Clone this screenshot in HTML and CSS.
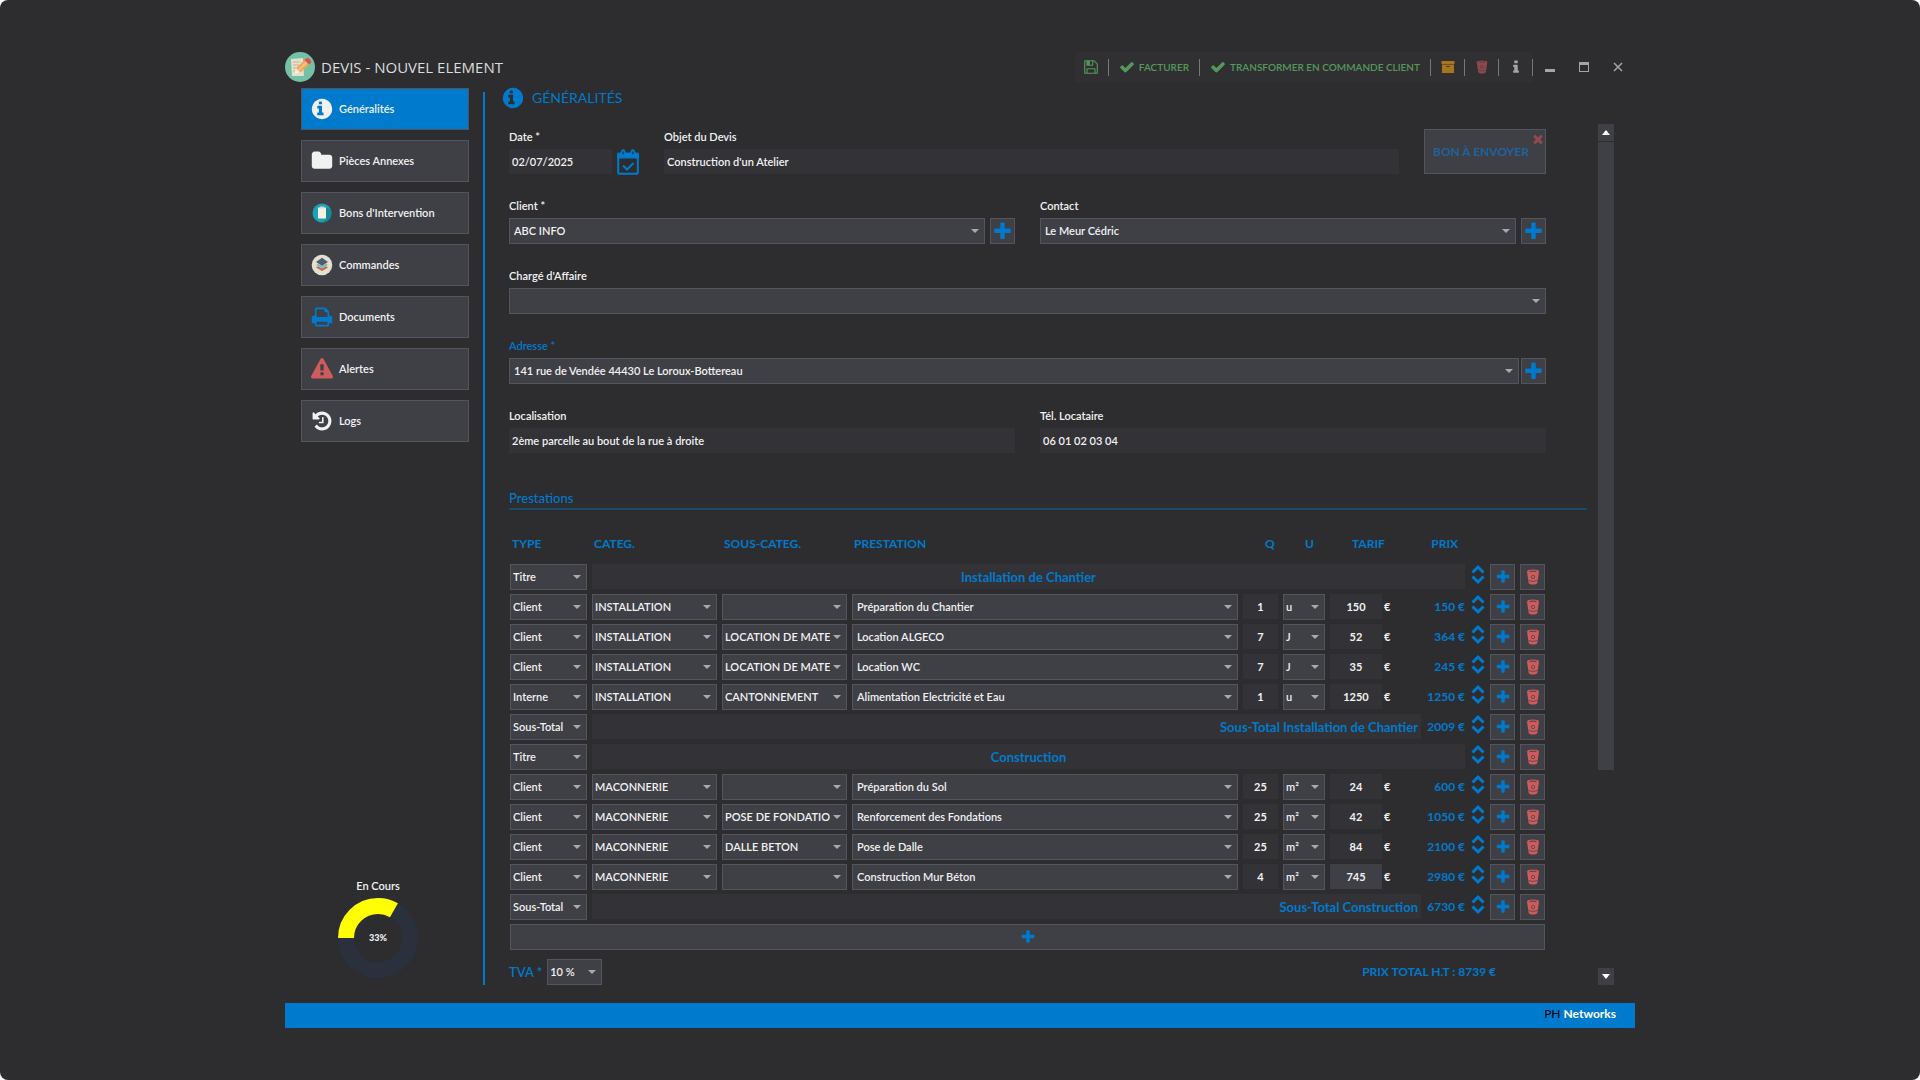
FILE: index.html
```html
<!DOCTYPE html>
<html lang="fr">
<head>
<meta charset="utf-8">
<title>Devis - Nouvel element</title>
<link rel="stylesheet" href="styles.css">
</head>
<body>
<svg class="sprite" aria-hidden="true">
  <symbol id="i-info-circle" viewBox="0 0 1792 1792"><path d="M1024 1376v-160q0-14-9-23t-23-9h-96v-512q0-14-9-23t-23-9h-320q-14 0-23 9t-9 23v160q0 14 9 23t23 9h96v320h-96q-14 0-23 9t-9 23v160q0 14 9 23t23 9h448q14 0 23-9t9-23zM896 480v-160q0-14-9-23t-23-9h-192q-14 0-23 9t-9 23v160q0 14 9 23t23 9h192q14 0 23-9t9-23zM1728 896q0 226-111 416t-303 303-418 113-416-113-304-303-112-416 112-416 304-303 416-113 418 113 303 303 111 416z"/></symbol>
  <symbol id="i-folder" viewBox="0 0 1792 1792"><path d="M1728 608v704q0 92-66 158t-158 66h-1216q-92 0-158-66t-66-158v-960q0-92 66-158t158-66h320q92 0 158 66t66 158v32h672q92 0 158 66t66 158z"/></symbol>
  <symbol id="i-plus" viewBox="0 0 1792 1792"><path d="M1600 736v192q0 40-28 68t-68 28h-416v416q0 40-28 68t-68 28h-192q-40 0-68-28t-28-68v-416h-416q-40 0-68-28t-28-68v-192q0-40 28-68t68-28h416v-416q0-40 28-68t68-28h192q40 0 68 28t28 68v416h416q40 0 68 28t28 68z"/></symbol>
  <symbol id="i-check" viewBox="0 0 1792 1792"><path d="M1671 566q0 40-28 68l-724 724-136 136q-28 28-68 28t-68-28l-136-136-362-362q-28-28-28-68t28-68l136-136q28-28 68-28t68 28l294 295 656-657q28-28 68-28t68 28l136 136q28 28 28 68z"/></symbol>
  <symbol id="i-times" viewBox="0 0 1792 1792"><path d="M1490 1322q0 40-28 68l-136 136q-28 28-68 28t-68-28l-294-294-294 294q-28 28-68 28t-68-28l-136-136q-28-28-28-68t28-68l294-294-294-294q-28-28-28-68t28-68l136-136q28-28 68-28t68 28l294 294 294-294q28-28 68-28t68 28l136 136q28 28 28 68t-28 68l-294 294 294 294q28 28 28 68z"/></symbol>
  <symbol id="i-info" viewBox="0 0 1792 1792"><path d="M1216 1344v128q0 26-19 45t-45 19h-512q-26 0-45-19t-19-45v-128q0-26 19-45t45-19h64v-384h-64q-26 0-45-19t-19-45v-128q0-26 19-45t45-19h384q26 0 45 19t19 45v576h64q26 0 45 19t19 45zM1088 224v192q0 26-19 45t-45 19h-256q-26 0-45-19t-19-45v-192q0-26 19-45t45-19h256q26 0 45 19t19 45z"/></symbol>
  <symbol id="i-warning" viewBox="0 0 1792 1792"><path d="M1024 1375v-190q0-14-9.5-23.5t-22.5-9.5h-192q-13 0-22.5 9.5t-9.5 23.5v190q0 14 9.5 23.5t22.5 9.5h192q13 0 22.5-9.5t9.5-23.5zm-2-374l18-459q0-12-10-19-13-11-24-11h-220q-11 0-24 11-10 7-10 21l17 457q0 10 10 16.5t24 6.5h185q14 0 23.5-6.5t10.5-16.5zm-14-934l768 1408q35 63-2 126-17 29-46.5 46t-63.5 17h-1536q-34 0-63.5-17t-46.5-46q-37-63-2-126l768-1408q17-31 47-49t65-18 65 18 47 49z"/></symbol>
  <symbol id="i-history" viewBox="0 0 1792 1792"><path d="M1664 896q0 156-61 298t-164 245-245 164-298 61q-172 0-327-72.5t-264-204.5q-7-10-6.5-22.5t8.5-20.5l137-138q10-9 25-9 16 2 23 12 73 95 179 147t225 52q104 0 198.5-40.5t163.5-109.5 109.5-163.5 40.5-198.5-40.5-198.5-109.5-163.5-163.5-109.5-198.5-40.5q-98 0-188 35.5t-160 101.5l137 138q31 30 14 69-17 40-59 40h-448q-26 0-45-19t-19-45v-448q0-42 40-59 39-17 69 14l130 129q107-101 244.5-156.5t284.5-55.5q156 0 298 61t245 164 164 245 61 298zm-640-288v448q0 14-9 23t-23 9h-320q-14 0-23-9t-9-23v-64q0-14 9-23t23-9h224v-352q0-14 9-23t23-9h64q14 0 23 9t9 23z"/></symbol>
  <symbol id="i-print" viewBox="0 0 1792 1792"><path d="M448 1536h896v-256h-896v256zm0-640h896v-384h-160q-40 0-68-28t-28-68v-160h-640v640zm1280 64v416q0 13-9.5 22.5t-22.5 9.5h-224v160q0 40-28 68t-68 28h-960q-40 0-68-28t-28-68v-160h-224q-13 0-22.5-9.5t-9.5-22.5v-416q0-79 56.5-135.5t135.5-56.5h64v-544q0-40 28-68t68-28h672q40 0 88 20t76 48l152 152q28 28 48 76t20 88v256h64q79 0 135.5 56.5t56.5 135.5z"/></symbol>
  <symbol id="i-save" viewBox="0 0 1792 1792"><path d="M512 1536h768v-384h-768v384zm896 0h128v-896q0-14-10-38.5t-20-34.5l-281-281q-10-10-34-20t-39-10v416q0 40-28 68t-68 28h-576q-40 0-68-28t-28-68v-416h-128v1280h128v-416q0-40 28-68t68-28h832q40 0 68 28t28 68v416zm-384-928v-320q0-13-9.5-22.5t-22.5-9.5h-192q-13 0-22.5 9.5t-9.5 22.5v320q0 13 9.5 22.5t22.5 9.5h192q13 0 22.5-9.5t9.5-22.5zm640 32v928q0 40-28 68t-68 28h-1344q-40 0-68-28t-28-68v-1344q0-40 28-68t68-28h928q40 0 88 20t76 48l280 280q28 28 48 76t20 88z"/></symbol>
  <symbol id="i-archive" viewBox="0 0 14 14"><path fill-rule="evenodd" d="M.5 1h13v3h-13zM1 4.500h12V13H1zM5.500 6v1h3V6z"/></symbol>
  <symbol id="i-trash" viewBox="0 0 14 16"><path d="M1 2.500Q1 .5 7 .5t6 2l-1.600 11q-.4 2-4.400 2t-4.400-2z"/><g fill="none" stroke="#3f3f46" stroke-opacity=".75"><path d="M3.500 2.700q3.500-1 7 0" stroke-width="1.200"/><circle cx="7" cy="8" r="1.700" stroke-width=".9"/><path d="M2.700 11.500q4.300 2 8.600 0" stroke-width=".9"/></g></symbol>
  <symbol id="i-calendar" viewBox="0 0 22 26"><rect x="1.200" y="6" width="19.600" height="18.800" rx="1" fill="none" stroke="currentColor" stroke-width="2"/><path d="M0 5q0-1.500 1.500-1.500h19Q22 3.500 22 5v4.500H0z"/><path d="M4 2.500a2.200 2.200 0 0 1 4.400 0v3a2.200 2.200 0 0 1-4.400 0zM13.600 2.500a2.200 2.200 0 0 1 4.400 0v3a2.200 2.200 0 0 1-4.400 0z"/><path d="M6.200 2.500v3M15.800 2.500v3" stroke="#2d2d30" stroke-width="1.200"/><path d="M6 16.500l4 4 6.500-6.500" fill="none" stroke="currentColor" stroke-width="2"/></symbol>
  <symbol id="i-updown" viewBox="0 0 14 22"><path d="M1.500 8.500l5.500-5.500 5.500 5.500M1.500 12.500l5.500 5.500 5.500-5.500" fill="none" stroke="currentColor" stroke-width="3"/></symbol>
</svg>

<div class="screen">
  <header class="titlebar">
    <svg class="app-logo" viewBox="0 0 30 30" aria-hidden="true"><circle cx="15" cy="15" r="15" fill="#74c1a5"/><path d="M6 7l12-1 1 18H7z" fill="#e6e0cd"/><path d="M8 10h7M8 13h6M8 16h3M8 19h2" stroke="#bdb7a6"/><path d="M10 22l1-6 4 4z" fill="#f7f3e6"/><path d="M11 16l8.500-8 4.500 4.500-8.500 8z" fill="#f2a65a"/><path d="M12.500 17.500l8.500-8 1.500 1.500-8.500 8z" fill="#f7c27c"/><path d="M19.500 8l2-1.700q1.500-.8 3.500 1.200t1 3.500L24 12.500z" fill="#d9534f"/></svg>
    <h1>DEVIS - NOUVEL ELEMENT</h1>
    <div class="toolbar">
      <button class="icon" aria-label="Enregistrer"><svg class="s16"><use href="#i-save"/></svg></button>
      <button><svg class="s16"><use href="#i-check"/></svg>FACTURER</button>
      <button><svg class="s16"><use href="#i-check"/></svg>TRANSFORMER EN COMMANDE CLIENT</button>
      <button class="icon amber" aria-label="Archiver"><svg class="s14"><use href="#i-archive"/></svg></button>
      <button class="icon red" aria-label="Supprimer"><svg class="s14"><use href="#i-trash"/></svg></button>
      <button class="icon grey" aria-label="Informations"><svg class="s16"><use href="#i-info"/></svg></button>
    </div>
    <div class="window-buttons">
      <button aria-label="Réduire"><svg viewBox="0 0 10 12"><path d="M0 8h10v3H0z"/></svg></button>
      <button aria-label="Agrandir"><svg viewBox="0 0 10 12"><path fill-rule="evenodd" d="M0 1h10v10H0zM1 4v6h8V4z"/></svg></button>
      <button aria-label="Fermer"><svg viewBox="0 0 10 12"><path d="M1 2l8 8M9 2l-8 8" fill="none" stroke="currentColor" stroke-width="1.500"/></svg></button>
    </div>
  </header>

  <main class="body">
    <aside class="sidebar">
      <nav>
        <button class="active"><svg class="s22"><use href="#i-info-circle"/></svg>Généralités</button>
        <button><svg class="s22"><use href="#i-folder"/></svg>Pièces Annexes</button>
        <button><svg class="s22" viewBox="0 0 22 22"><circle cx="11" cy="11" r="9.500" fill="#1aa3b5"/><path d="M11 20.500A9.500 9.500 0 0 0 20 8l-5-3v12z" fill="#16889a"/><rect x="7" y="5.500" width="8" height="11" fill="#f4f1e4"/><rect x="9" y="4.500" width="4" height="2" fill="#d9d5c5"/></svg>Bons d'Intervention</button>
        <button><svg class="s22" viewBox="0 0 22 22"><circle cx="11" cy="11" r="10.300" fill="#e3e0cf"/><path d="M5 13.500l6 3.500 6-3.500-2-1.200-4 2.200-4-2.200z" fill="#cf5f5b"/><path d="M5 11l6 3.500 6-3.500-2-1.300-4 2-4-2z" fill="#76c2af"/><path d="M11 3.800l6 4.200-6 3.700L5 8z" fill="#4f5d73"/></svg>Commandes</button>
        <button><svg class="s22 blue"><use href="#i-print"/></svg>Documents</button>
        <button><svg class="s22 danger"><use href="#i-warning"/></svg>Alertes</button>
        <button><svg class="s22"><use href="#i-history"/></svg>Logs</button>
      </nav>
      <div class="status">
        <span>En Cours</span>
        <div class="gauge">
          <svg viewBox="0 0 80 80" aria-hidden="true"><circle class="gauge-track" cx="40" cy="40" r="32"/><circle class="gauge-value" cx="40" cy="40" r="32" pathLength="100" transform="rotate(180 40 40)"/></svg>
          <strong>33%</strong>
        </div>
      </div>
    </aside>

    <section class="content">
      <h2><svg class="s22"><use href="#i-info-circle"/></svg>GÉNÉRALITÉS</h2>
      <div class="scroll-area">
        <form class="form">
          <div class="fields">
            <div class="row row-top">
              <div class="field date"><label for="date">Date *</label><div class="control"><input id="date" value="02/07/2025"><button type="button" class="calendar" aria-label="Choisir une date"><svg><use href="#i-calendar"/></svg></button></div></div>
              <div class="field grow"><label for="objet">Objet du Devis</label><input id="objet" value="Construction d'un Atelier"></div>
              <button type="button" class="send"><span>BON À ENVOYER</span><svg><use href="#i-times"/></svg></button>
            </div>
            <div class="row">
              <div class="field grow"><label for="client">Client *</label><div class="control"><select id="client"><option>ABC INFO</option></select><button type="button" class="add" aria-label="Ajouter un client"><svg><use href="#i-plus"/></svg></button></div></div>
              <div class="field grow"><label for="contact">Contact</label><div class="control"><select id="contact"><option>Le Meur Cédric</option></select><button type="button" class="add" aria-label="Ajouter un contact"><svg><use href="#i-plus"/></svg></button></div></div>
            </div>
            <div class="field"><label for="charge">Chargé d'Affaire</label><select id="charge"><option></option></select></div>
            <div class="field"><label class="blue" for="adresse">Adresse *</label><div class="control tight"><select id="adresse"><option>141 rue de Vendée 44430 Le Loroux-Bottereau</option></select><button type="button" class="add" aria-label="Ajouter une adresse"><svg><use href="#i-plus"/></svg></button></div></div>
            <div class="row">
              <div class="field grow"><label for="loc">Localisation</label><input id="loc" value="2ème parcelle au bout de la rue à droite"></div>
              <div class="field grow"><label for="tel">Tél. Locataire</label><input id="tel" value="06 01 02 03 04"></div>
            </div>
          </div>

          <h3>Prestations</h3>
          <div class="lines">
            <table>
              <colgroup><col class="c-type"><col class="c-cat"><col class="c-cat"><col><col class="c-q"><col class="c-u"><col class="c-tarif"><col class="c-prix"><col class="c-move"><col class="c-btn"><col class="c-btn"></colgroup>
              <thead><tr><th>TYPE</th><th>CATEG.</th><th>SOUS-CATEG.</th><th>PRESTATION</th><th class="num">Q</th><th class="num">U</th><th class="num">TARIF</th><th class="end">PRIX</th><td></td><td></td><td></td></tr></thead>
              <tbody>
                <tr><td><select aria-label="Type"><option>Titre</option></select></td><td colspan="7"><input class="title" aria-label="Titre" value="Installation de Chantier"></td><td><button type="button" class="move" aria-label="Déplacer"><svg><use href="#i-updown"/></svg></button></td><td><button type="button" class="add" aria-label="Ajouter"><svg><use href="#i-plus"/></svg></button></td><td><button type="button" class="del" aria-label="Supprimer"><svg><use href="#i-trash"/></svg></button></td></tr>
                <tr><td><select aria-label="Type"><option>Client</option></select></td><td><select aria-label="Catégorie"><option>INSTALLATION</option></select></td><td><select aria-label="Sous-catégorie"><option></option></select></td><td><select class="wide" aria-label="Prestation"><option>Préparation du Chantier</option></select></td><td><input class="qty" aria-label="Quantité" value="1"></td><td><select aria-label="Unité"><option>u</option></select></td><td><div class="tarif"><input class="qty" aria-label="Tarif" value="150">€</div></td><td class="prix">150 €</td><td><button type="button" class="move" aria-label="Déplacer"><svg><use href="#i-updown"/></svg></button></td><td><button type="button" class="add" aria-label="Ajouter"><svg><use href="#i-plus"/></svg></button></td><td><button type="button" class="del" aria-label="Supprimer"><svg><use href="#i-trash"/></svg></button></td></tr>
                <tr><td><select aria-label="Type"><option>Client</option></select></td><td><select aria-label="Catégorie"><option>INSTALLATION</option></select></td><td><select aria-label="Sous-catégorie"><option>LOCATION DE MATERIEL</option></select></td><td><select class="wide" aria-label="Prestation"><option>Location ALGECO</option></select></td><td><input class="qty" aria-label="Quantité" value="7"></td><td><select aria-label="Unité"><option>J</option></select></td><td><div class="tarif"><input class="qty" aria-label="Tarif" value="52">€</div></td><td class="prix">364 €</td><td><button type="button" class="move" aria-label="Déplacer"><svg><use href="#i-updown"/></svg></button></td><td><button type="button" class="add" aria-label="Ajouter"><svg><use href="#i-plus"/></svg></button></td><td><button type="button" class="del" aria-label="Supprimer"><svg><use href="#i-trash"/></svg></button></td></tr>
                <tr><td><select aria-label="Type"><option>Client</option></select></td><td><select aria-label="Catégorie"><option>INSTALLATION</option></select></td><td><select aria-label="Sous-catégorie"><option>LOCATION DE MATERIEL</option></select></td><td><select class="wide" aria-label="Prestation"><option>Location WC</option></select></td><td><input class="qty" aria-label="Quantité" value="7"></td><td><select aria-label="Unité"><option>J</option></select></td><td><div class="tarif"><input class="qty" aria-label="Tarif" value="35">€</div></td><td class="prix">245 €</td><td><button type="button" class="move" aria-label="Déplacer"><svg><use href="#i-updown"/></svg></button></td><td><button type="button" class="add" aria-label="Ajouter"><svg><use href="#i-plus"/></svg></button></td><td><button type="button" class="del" aria-label="Supprimer"><svg><use href="#i-trash"/></svg></button></td></tr>
                <tr><td><select aria-label="Type"><option>Interne</option></select></td><td><select aria-label="Catégorie"><option>INSTALLATION</option></select></td><td><select aria-label="Sous-catégorie"><option>CANTONNEMENT</option></select></td><td><select class="wide" aria-label="Prestation"><option>Alimentation Electricité et Eau</option></select></td><td><input class="qty" aria-label="Quantité" value="1"></td><td><select aria-label="Unité"><option>u</option></select></td><td><div class="tarif"><input class="qty" aria-label="Tarif" value="1250">€</div></td><td class="prix">1250 €</td><td><button type="button" class="move" aria-label="Déplacer"><svg><use href="#i-updown"/></svg></button></td><td><button type="button" class="add" aria-label="Ajouter"><svg><use href="#i-plus"/></svg></button></td><td><button type="button" class="del" aria-label="Supprimer"><svg><use href="#i-trash"/></svg></button></td></tr>
                <tr><td><select aria-label="Type"><option>Sous-Total</option></select></td><td colspan="7"><div class="subtotal"><input class="title" aria-label="Sous-total" value="Sous-Total Installation de Chantier"><span class="prix">2009 €</span></div></td><td><button type="button" class="move" aria-label="Déplacer"><svg><use href="#i-updown"/></svg></button></td><td><button type="button" class="add" aria-label="Ajouter"><svg><use href="#i-plus"/></svg></button></td><td><button type="button" class="del" aria-label="Supprimer"><svg><use href="#i-trash"/></svg></button></td></tr>
                <tr><td><select aria-label="Type"><option>Titre</option></select></td><td colspan="7"><input class="title" aria-label="Titre" value="Construction"></td><td><button type="button" class="move" aria-label="Déplacer"><svg><use href="#i-updown"/></svg></button></td><td><button type="button" class="add" aria-label="Ajouter"><svg><use href="#i-plus"/></svg></button></td><td><button type="button" class="del" aria-label="Supprimer"><svg><use href="#i-trash"/></svg></button></td></tr>
                <tr><td><select aria-label="Type"><option>Client</option></select></td><td><select aria-label="Catégorie"><option>MACONNERIE</option></select></td><td><select aria-label="Sous-catégorie"><option></option></select></td><td><select class="wide" aria-label="Prestation"><option>Préparation du Sol</option></select></td><td><input class="qty" aria-label="Quantité" value="25"></td><td><select aria-label="Unité"><option>m²</option></select></td><td><div class="tarif"><input class="qty" aria-label="Tarif" value="24">€</div></td><td class="prix">600 €</td><td><button type="button" class="move" aria-label="Déplacer"><svg><use href="#i-updown"/></svg></button></td><td><button type="button" class="add" aria-label="Ajouter"><svg><use href="#i-plus"/></svg></button></td><td><button type="button" class="del" aria-label="Supprimer"><svg><use href="#i-trash"/></svg></button></td></tr>
                <tr><td><select aria-label="Type"><option>Client</option></select></td><td><select aria-label="Catégorie"><option>MACONNERIE</option></select></td><td><select aria-label="Sous-catégorie"><option>POSE DE FONDATIONS</option></select></td><td><select class="wide" aria-label="Prestation"><option>Renforcement des Fondations</option></select></td><td><input class="qty" aria-label="Quantité" value="25"></td><td><select aria-label="Unité"><option>m²</option></select></td><td><div class="tarif"><input class="qty" aria-label="Tarif" value="42">€</div></td><td class="prix">1050 €</td><td><button type="button" class="move" aria-label="Déplacer"><svg><use href="#i-updown"/></svg></button></td><td><button type="button" class="add" aria-label="Ajouter"><svg><use href="#i-plus"/></svg></button></td><td><button type="button" class="del" aria-label="Supprimer"><svg><use href="#i-trash"/></svg></button></td></tr>
                <tr><td><select aria-label="Type"><option>Client</option></select></td><td><select aria-label="Catégorie"><option>MACONNERIE</option></select></td><td><select aria-label="Sous-catégorie"><option>DALLE BETON</option></select></td><td><select class="wide" aria-label="Prestation"><option>Pose de Dalle</option></select></td><td><input class="qty" aria-label="Quantité" value="25"></td><td><select aria-label="Unité"><option>m²</option></select></td><td><div class="tarif"><input class="qty" aria-label="Tarif" value="84">€</div></td><td class="prix">2100 €</td><td><button type="button" class="move" aria-label="Déplacer"><svg><use href="#i-updown"/></svg></button></td><td><button type="button" class="add" aria-label="Ajouter"><svg><use href="#i-plus"/></svg></button></td><td><button type="button" class="del" aria-label="Supprimer"><svg><use href="#i-trash"/></svg></button></td></tr>
                <tr><td><select aria-label="Type"><option>Client</option></select></td><td><select aria-label="Catégorie"><option>MACONNERIE</option></select></td><td><select aria-label="Sous-catégorie"><option></option></select></td><td><select class="wide" aria-label="Prestation"><option>Construction Mur Béton</option></select></td><td><input class="qty" aria-label="Quantité" value="4"></td><td><select aria-label="Unité"><option>m²</option></select></td><td><div class="tarif"><input class="qty current" aria-label="Tarif" value="745">€</div></td><td class="prix">2980 €</td><td><button type="button" class="move" aria-label="Déplacer"><svg><use href="#i-updown"/></svg></button></td><td><button type="button" class="add" aria-label="Ajouter"><svg><use href="#i-plus"/></svg></button></td><td><button type="button" class="del" aria-label="Supprimer"><svg><use href="#i-trash"/></svg></button></td></tr>
                <tr><td><select aria-label="Type"><option>Sous-Total</option></select></td><td colspan="7"><div class="subtotal"><input class="title" aria-label="Sous-total" value="Sous-Total Construction"><span class="prix">6730 €</span></div></td><td><button type="button" class="move" aria-label="Déplacer"><svg><use href="#i-updown"/></svg></button></td><td><button type="button" class="add" aria-label="Ajouter"><svg><use href="#i-plus"/></svg></button></td><td><button type="button" class="del" aria-label="Supprimer"><svg><use href="#i-trash"/></svg></button></td></tr>
              </tbody>
              <tfoot><tr><td colspan="11"><button type="button" class="add" aria-label="Ajouter une ligne"><svg><use href="#i-plus"/></svg></button></td></tr></tfoot>
            </table>
          </div>
          <div class="totals">
            <label for="tva">TVA *</label>
            <select id="tva"><option>10 %</option></select>
            <strong>PRIX TOTAL H.T : 8739 €</strong>
          </div>
        </form>
        <div class="scrollbar">
          <button aria-label="Défiler vers le haut"><svg viewBox="0 0 8 5"><path d="M0 5l4-5 4 5z"/></svg></button>
          <div class="thumb"></div>
          <div class="track"></div>
          <button aria-label="Défiler vers le bas"><svg viewBox="0 0 8 5"><path d="M0 0l4 5 4-5z"/></svg></button>
        </div>
      </div>
    </section>
  </main>

  <footer class="footer"><span>PH</span> <strong>Networks</strong></footer>
</div>
</body>
</html>
```
FILE: styles.css
```css
:root {
  --bg: #2d2d30;
  --field: #333337;
  --surface: #3f3f46;
  --border: #54545c;
  --blue: #007acc;
  --red: #cd5c5c;
}

* { box-sizing: border-box; }

html { background: #fff; }

body {
  margin: 0;
  color: #f1f1f1;
  font: 600 11px/16px Lato, "Open Sans", sans-serif;
}

h1, h2, h3 { margin: 0; font-weight: 400; }

button, input, select {
  margin: 0;
  padding: 0;
  border: 0;
  border-radius: 0;
  background: none;
  color: inherit;
  font: inherit;
}

button {
  display: flex;
  align-items: center;
  cursor: pointer;
}

svg { display: block; flex: none; fill: currentColor; }

.sprite { position: absolute; width: 0; height: 0; }
.s14 { width: 14px; height: 14px; }
.s16 { width: 16px; height: 16px; }
.s22 { width: 22px; height: 22px; }
.blue { color: var(--blue); }
.danger { color: var(--red); }

.screen {
  min-height: 100vh;
  padding: 50px 285px;
  border-radius: 8px;
  background: var(--bg);
}

/* Title bar */
.titlebar { display: flex; align-items: center; height: 34px; }
.app-logo { width: 30px; height: 30px; }
.titlebar h1 {
  flex: 1;
  margin-left: 6px;
  color: #dcdcdc;
  font: 400 15px/20px "Open Sans", sans-serif;
}
.toolbar {
  display: flex;
  align-items: center;
  height: 30px;
  background: #303033;
  color: #55985a;
  font-size: 10px;
}
.toolbar button {
  justify-content: center;
  gap: 4px;
  height: 17px;
  padding: 0 10px;
  border-right: 1px solid #77777a;
}
.toolbar .icon { width: 34px; padding: 0; }
.toolbar .amber { color: #a8741c; }
.toolbar .red { color: #8f484b; }
.toolbar .grey { color: #a5a5a7; }
.window-buttons { display: flex; color: #a5a5a7; }
.window-buttons button { justify-content: center; width: 34px; height: 30px; }
.window-buttons svg { width: 10px; height: 12px; }

/* Main layout */
.body { display: grid; grid-template-columns: 198px 1fr; }
.sidebar {
  display: flex;
  flex-direction: column;
  justify-content: space-between;
  padding: 4px 14px 25px 16px;
}
.sidebar nav { display: flex; flex-direction: column; gap: 10px; }
.sidebar nav button {
  gap: 6px;
  height: 42px;
  padding: 0 9px;
  border: 1px solid var(--border);
  background: var(--surface);
}
.sidebar nav .active { background: var(--blue); }
.status { width: 80px; margin-left: 37px; text-align: center; }
.status span { display: block; margin-bottom: 4px; }
.gauge { display: grid; place-items: center; }
.gauge > * { grid-area: 1 / 1; }
.gauge svg { width: 80px; height: 80px; fill: none; stroke-width: 16px; }
.gauge strong { font-size: 9px; }
.gauge-track { stroke: #2a313d; }
.gauge-value { stroke: #ff0; stroke-dasharray: 33.3 100; }

.content {
  display: flex;
  flex-direction: column;
  padding: 3px 21px 18px 0;
}
.content h2 {
  display: flex;
  align-items: center;
  gap: 8px;
  margin-left: 19px;
  color: var(--blue);
  font: 400 14px/22px Lato, sans-serif;
}
.scroll-area {
  display: flex;
  gap: 11px;
  margin-top: -17px;
  padding: 32px 0 0 24px;
  border-left: 2px solid var(--blue);
}
.form { flex: 1; min-width: 0; padding-top: 5px; }

/* Form fields */
.fields { display: flex; flex-direction: column; gap: 24px; padding-right: 41px; }
.row { display: flex; gap: 25px; }
.field { display: flex; flex-direction: column; gap: 4px; }
.grow { flex: 1; }
.control { display: flex; gap: 5px; }
.tight { gap: 2px; }
.date { width: 130px; }

input {
  display: block;
  width: 100%;
  min-width: 0;
  height: 25px;
  padding: 0 3px;
  background: var(--field);
}
select {
  appearance: none;
  display: block;
  width: 100%;
  height: 26px;
  padding: 0 16px 0 4px;
  border: 1px solid var(--border);
  background: var(--surface) url("data:image/svg+xml,%3Csvg xmlns='http://www.w3.org/2000/svg' width='8' height='4'%3E%3Cpath d='M0 0h8L4 4z' fill='%23aaaaac'/%3E%3C/svg%3E") no-repeat right 5px center;
}
.add, .del {
  flex: none;
  justify-content: center;
  width: 25px;
  height: 26px;
  border: 1px solid var(--border);
  background: var(--surface);
}
.add { color: var(--blue); }
.add svg { width: 21px; height: 21px; }
.del { color: var(--red); }
.del svg { width: 14px; height: 16px; }
.calendar { height: 25px; color: var(--blue); }
.calendar svg { width: 22px; height: 26px; }
.send {
  align-items: flex-start;
  justify-content: space-between;
  width: 122px;
  height: 45px;
  padding: 2px 0 0 8px;
  border: 1px solid var(--border);
  background: var(--surface);
  color: #20639a;
  font-size: 12px;
  font-weight: 700;
}
.send span { padding-top: 12px; white-space: nowrap; }
.send svg { width: 14px; height: 14px; color: #924a4e; }

/* Quote lines */
.form h3 {
  margin-top: 35px;
  border-bottom: 2px solid #1c4a6b;
  color: var(--blue);
  font: 500 13px/20px Lato, sans-serif;
}
.lines { margin: 20px 37px 0 -4px; }
table { width: 100%; table-layout: fixed; border-spacing: 5px 4px; }
th, td { height: 26px; padding: 0; }
tbody td { vertical-align: top; }
th {
  padding: 0 0 6px 2px;
  color: var(--blue);
  font-size: 12px;
  font-weight: 700;
  text-align: left;
}
th.num { padding-left: 22px; }
th.end { padding-right: 7px; text-align: right; }
td select { padding-left: 2px; }
td .wide { padding-left: 4px; }
td .add, td .del { width: 100%; }
td .add svg { width: 16px; height: 16px; }
.c-type { width: 77px; }
.c-cat { width: 125px; }
.c-q { width: 35px; }
.c-u { width: 42px; }
.c-tarif { width: 62px; }
.c-prix { width: 68px; }
.c-move { width: 15px; }
.c-btn { width: 25px; }
.qty { font-weight: 700; text-align: center; }
.current { background: var(--surface); }
.tarif { display: flex; align-items: center; gap: 2px; font-weight: 700; }
.tarif input { width: 52px; }
.title { color: var(--blue); font-size: 13px; font-weight: 700; text-align: center; }
.subtotal { display: flex; align-items: center; }
.subtotal .title { flex: 1; text-align: right; }
.subtotal .prix { width: 44px; }
.prix {
  color: var(--blue);
  font-size: 12px;
  font-weight: 700;
  line-height: 25px;
  text-align: right;
  white-space: nowrap;
}
.move { justify-content: center; width: 100%; color: var(--blue); }
.move svg { width: 14px; height: 22px; }

.totals {
  display: flex;
  align-items: center;
  gap: 5px;
  margin-top: 5px;
  padding-right: 91px;
  color: var(--blue);
  font-size: 13px;
}
.totals select { width: 55px; padding-left: 2px; color: #f1f1f1; font-size: 11px; }
.totals strong { margin-left: auto; font-size: 12px; font-weight: 700; }

/* Scroll bar */
.scrollbar { display: flex; flex-direction: column; width: 16px; }
.scrollbar button { justify-content: center; height: 17px; background: var(--surface); color: #fff; }
.scrollbar svg { width: 8px; height: 5px; }
.scrollbar .thumb { flex: 76; margin-top: 1px; background: var(--surface); }
.scrollbar .track { flex: 24; }

.footer {
  height: 25px;
  padding-right: 19px;
  background: var(--blue);
  color: #fff;
  font-size: 12px;
  line-height: 22px;
  text-align: right;
}
.footer span { color: #000; font-weight: 400; }
.footer strong { font-weight: 700; }
```
